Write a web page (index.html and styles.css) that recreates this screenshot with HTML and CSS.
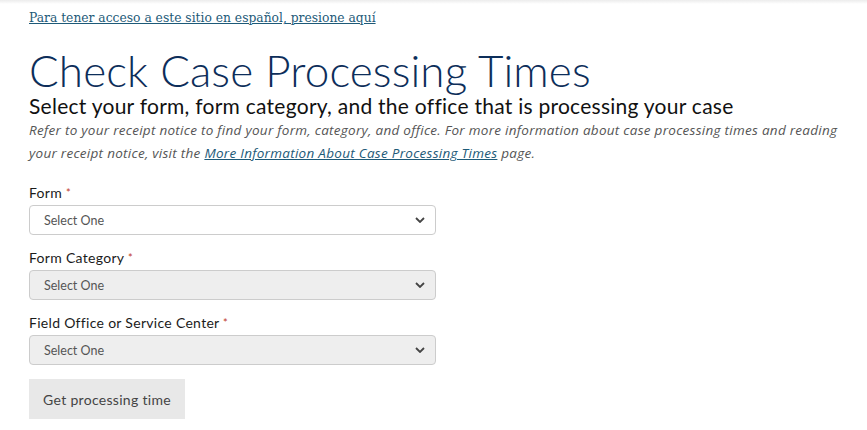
FILE: index.html
```html
<!DOCTYPE html>
<html lang="en">
<head>
<meta charset="utf-8">
<title>Check Case Processing Times</title>
<link rel="stylesheet" href="styles.css">
</head>
<body>
<div class="topbar"></div>
<main class="page">
  <a class="lang-link" href="#">Para tener acceso a este sitio en español, presione aquí</a>
  <h1 class="title">Check Case Processing Times</h1>
  <h2 class="subtitle">Select your form, form category, and the office that is processing your case</h2>
  <p class="intro">Refer to your receipt notice to find your form, category, and office. For more information about case processing times and reading your receipt notice, visit the <a href="#">More Information About Case Processing Times</a> page.</p>
  <form class="form">
    <div class="field">
      <label class="label">Form <span class="req">*</span></label>
      <div class="select">Select One<svg class="chev" viewBox="0 0 10 6" width="10" height="6"><path d="M1 1l4 4 4-4" fill="none" stroke="#444" stroke-width="1.8"/></svg></div>
    </div>
    <div class="field">
      <label class="label">Form Category <span class="req">*</span></label>
      <div class="select disabled">Select One<svg class="chev" viewBox="0 0 10 6" width="10" height="6"><path d="M1 1l4 4 4-4" fill="none" stroke="#444" stroke-width="1.8"/></svg></div>
    </div>
    <div class="field">
      <label class="label">Field Office or Service Center <span class="req">*</span></label>
      <div class="select disabled">Select One<svg class="chev" viewBox="0 0 10 6" width="10" height="6"><path d="M1 1l4 4 4-4" fill="none" stroke="#444" stroke-width="1.8"/></svg></div>
    </div>
    <button type="button" class="btn">Get processing time</button>
  </form>
</main>
</body>
</html>
```
FILE: styles.css
```css
html, body { margin: 0; padding: 0; background: #fff; }
body { font-family: Lato, "Liberation Sans", sans-serif; color: #1b1b1b; }
.topbar { height: 4px; background: linear-gradient(#ececec, #fff); }
.page { padding: 2px 29px 0; }
.lang-link {
  display: inline-block;
  font-family: "DejaVu Serif", "Liberation Serif", serif;
  font-size: 12.3px;
  color: #1d5a78;
  line-height: 20px;
  text-decoration: underline;
}
.title {
  margin: 19px 0 0;
  font-weight: 300;
  font-size: 44px;
  line-height: 46px;
  color: #0d2e5a;
  letter-spacing: 0.1px;
}
.subtitle {
  margin: 0;
  font-weight: 400;
  font-size: 21px;
  line-height: 26px;
  color: #111;
  letter-spacing: 0.26px;
}
.intro {
  margin: 0;
  font-family: "Open Sans", Lato, sans-serif;
  font-style: italic;
  font-size: 13.5px;
  line-height: 23px;
  color: #555;
  letter-spacing: 0.28px;
  max-width: 830px;
}
.intro a { color: #1d5a78; }
.form { margin-top: 19px; display: flex; flex-direction: column; gap: 14px; align-items: flex-start; }
.field { display: flex; flex-direction: column; gap: 3px; }
.label { font-size: 14px; line-height: 18px; color: #1b1b1b; letter-spacing: 0.3px; }
.req { color: #c0392b; font-size: 11px; vertical-align: top; }
.select {
  box-sizing: border-box;
  width: 407px; height: 30px;
  border: 1px solid #ccc; border-radius: 4px;
  background: #fff;
  display: flex; align-items: center; justify-content: space-between;
  padding: 0 10px 0 14px;
  font-size: 12.5px; color: #555;
}
.select.disabled { background: #eee; }
.btn {
  border: 0; background: #e8e8e8;
  width: 156px; height: 40px;
  font-family: Lato, "Liberation Sans", sans-serif;
  font-size: 14px; color: #444;
  letter-spacing: 0.3px;
  padding: 0;
}
```
